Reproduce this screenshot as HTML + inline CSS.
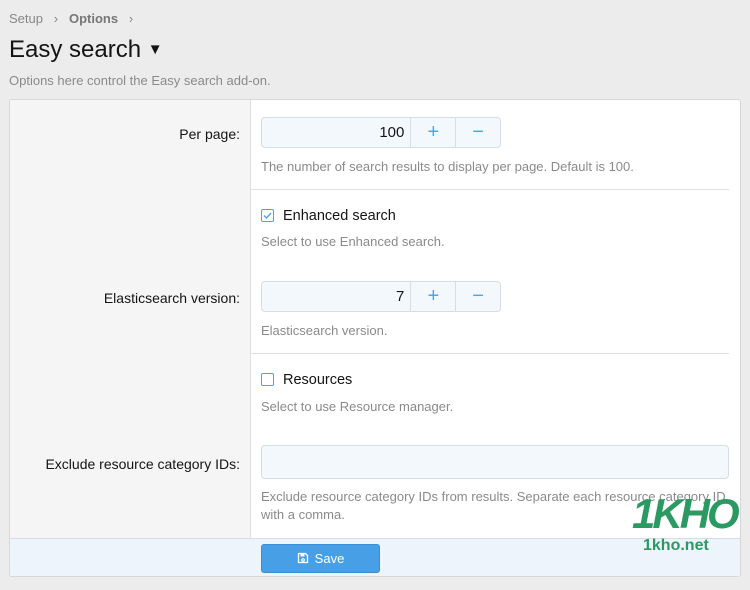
<!DOCTYPE html>
<html><head><style>
body{margin:0;width:750px;height:590px;background:#ececec;font-family:"Liberation Sans",Arial,sans-serif;position:relative;overflow:hidden}
.a{position:absolute}
.crumb{left:9px;top:11px;font-size:13px;color:#888}
.crumb b{color:#777}
h1{position:absolute;left:9px;top:36px;margin:0;font-size:24px;font-weight:normal;color:#141414}
.desc{left:9px;top:73px;font-size:13px;color:#8a8a8a}
.panel{left:9px;top:99px;width:730px;height:476px;background:#fff;border:1px solid #d8d8d8;border-radius:3px;overflow:hidden}
.left{left:0;top:0;width:240px;height:438px;background:#f5f5f5;border-right:1px solid #e0e0e0}
.lbl{font-size:14px;color:#141414;right:500px;text-align:right}
.hint{font-size:13px;color:#8a8a8a}
.sp{height:31px;border:1px solid #d8dde3;border-radius:4px;background:#f3f8fd;display:flex;box-sizing:border-box}
.sp .v{width:150px;border-right:1px solid #d8dde3;text-align:right;padding-right:6px;line-height:30px;font-size:15px;color:#141414;box-sizing:border-box}
.sp .b{width:44px;border-right:1px solid #d8dde3;text-align:center;line-height:28px;color:#47a7eb;font-size:20px}
.sp .b:last-child{border-right:0}
.hr{left:241px;width:478px;height:1px;background:#e0e0e0}
.cb{width:11px;height:11px;border:1px solid #47a7eb;border-radius:2px;background:#fff}
.cbl{font-size:14.5px;color:#141414}
.foot{left:0;top:438px;width:730px;height:38px;background:#edf4fb;border-top:1px solid #d8dde3}
.btn{left:251px;top:5px;width:119px;height:29px;background:#47a0e6;border:1px solid #3a8fd3;border-radius:3px;box-sizing:border-box;color:#fff;font-size:13px;text-align:center;line-height:27px}
</style></head><body>
<div class="a crumb">Setup &nbsp;&nbsp;›&nbsp;&nbsp; <b>Options</b> &nbsp;&nbsp;›</div>
<h1>Easy search <span style="font-size:15px;position:relative;top:-3px">▼</span></h1>
<div class="a desc">Options here control the Easy search add-on.</div>
<div class="a panel">
 <div class="a left"></div>
 <div class="a lbl" style="top:26px">Per page:</div>
 <div class="a sp" style="left:251px;top:17px;width:240px"><div class="v">100</div><div class="b">+</div><div class="b">−</div></div>
 <div class="a hint" style="left:251px;top:59px">The number of search results to display per page. Default is 100.</div>
 <div class="a hr" style="top:89px"></div>
 <div class="a cb" style="left:251px;top:109px"><svg width="11" height="11" style="position:absolute;left:0;top:0"><path d="M2 5.5l2.5 2.5 4.5-5" stroke="#47a7eb" stroke-width="1.4" fill="none"/></svg></div>
 <div class="a cbl" style="left:273px;top:108px">Enhanced search</div>
 <div class="a hint" style="left:251px;top:134px">Select to use Enhanced search.</div>
 <div class="a lbl" style="top:190px">Elasticsearch version:</div>
 <div class="a sp" style="left:251px;top:181px;width:240px"><div class="v">7</div><div class="b">+</div><div class="b">−</div></div>
 <div class="a hint" style="left:251px;top:223px">Elasticsearch version.</div>
 <div class="a hr" style="top:253px"></div>
 <div class="a cb" style="left:251px;top:273px"></div>
 <div class="a cbl" style="left:273px;top:272px">Resources</div>
 <div class="a hint" style="left:251px;top:299px">Select to use Resource manager.</div>
 <div class="a lbl" style="top:356px">Exclude resource category IDs:</div>
 <div class="a" style="left:251px;top:345px;width:468px;height:34px;border:1px solid #d8dde3;border-radius:4px;background:#f3f8fd;box-sizing:border-box"></div>
 <div class="a hint" style="left:251px;top:388px;width:475px;line-height:18px">Exclude resource category IDs from results. Separate each resource category ID with a comma.</div>
 <div class="a foot"><div class="a btn"><svg width="12" height="12" style="vertical-align:-1px;margin-right:6px" viewBox="0 0 12 12"><path d="M1.5 1.5h7l2 2v7h-9z" stroke="#fff" stroke-width="1.3" fill="none"/><rect x="3.5" y="1.5" width="4" height="3" fill="#fff"/><circle cx="6" cy="8" r="1.3" stroke="#fff" stroke-width="1.2" fill="none"/></svg>Save</div></div>
</div>
<div class="a" style="left:632px;top:490px;font-size:42px;font-weight:bold;font-style:italic;color:#2a9a62;letter-spacing:-3px">1KHO</div>
<div class="a" style="left:643px;top:537px;font-size:16px;font-weight:bold;color:#2a9a62">1kho.net</div>
</body></html>
